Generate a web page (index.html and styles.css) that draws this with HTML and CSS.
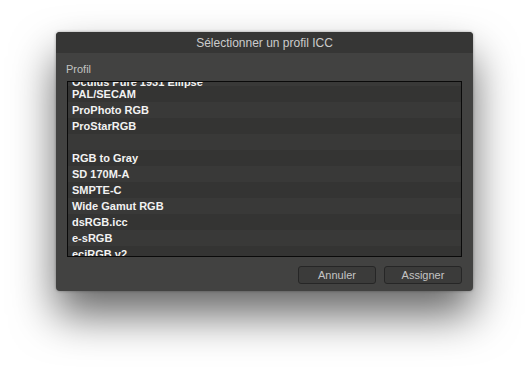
FILE: index.html
```html
<!DOCTYPE html>
<html lang="fr">
<head>
<meta charset="utf-8">
<title>Sélectionner un profil ICC</title>
<link rel="stylesheet" href="styles.css">
</head>
<body>
<div class="stage">
<div class="dialog">
  <div class="titlebar">Sélectionner un profil ICC</div>
  <div class="content">
    <div class="label">Profil</div>
    <div class="listbox">
      <ul class="list">
        <li class="partial">Oculus Pure 1931 Ellipse</li>
        <li>PAL/SECAM</li>
        <li>ProPhoto RGB</li>
        <li>ProStarRGB</li>
        <li></li>
        <li>RGB to Gray</li>
        <li>SD 170M-A</li>
        <li>SMPTE-C</li>
        <li>Wide Gamut RGB</li>
        <li>dsRGB.icc</li>
        <li>e-sRGB</li>
        <li>eciRGB v2</li>
      </ul>
    </div>
    <div class="buttons">
      <button class="btn">Annuler</button>
      <button class="btn">Assigner</button>
    </div>
  </div>
</div>
</div>
</body>
</html>
```
FILE: styles.css
```css
html, body {
  margin: 0;
  padding: 0;
  background: #ffffff;
  font-family: "Liberation Sans", Arial, sans-serif;
}
.stage {
  width: 529px;
  height: 371px;
  box-sizing: border-box;
  padding: 32px 0 0 56px;
  background: #ffffff;
}
.dialog {
  width: 417px;
  height: 259px;
  background: #424241;
  border-radius: 4px;
  box-shadow: 0 24px 44px rgba(0, 0, 0, 0.6), 0 0 3px rgba(0, 0, 0, 0.35);
  display: flex;
  flex-direction: column;
  overflow: hidden;
}
.titlebar {
  height: 21px;
  line-height: 22px;
  background: #363635;
  color: #cccccc;
  font-size: 12px;
  text-align: center;
}
.content {
  flex: 1;
  display: flex;
  flex-direction: column;
  padding: 9px 11px 7px 10px;
}
.label {
  font-size: 11px;
  line-height: 14px;
  color: #c2c2c2;
  margin-bottom: 5px;
}
.listbox {
  margin-left: 1px;
  height: 174px;
  border: 1px solid #0a0a0a;
  background: #343433;
  overflow: hidden;
}
.list {
  list-style: none;
  margin: -12px 0 0 0;
  padding: 0;
}
.list li {
  height: 16px;
  line-height: 16px;
  padding-left: 4px;
  font-size: 11px;
  font-weight: bold;
  color: #f2f2f2;
  background: #393938;
  white-space: nowrap;
}
.list li.partial {
  line-height: 24px;
}
.list li:nth-child(even) {
  background: #343433;
}
.buttons {
  margin-top: 9px;
  display: flex;
  justify-content: flex-end;
  gap: 8px;
}
.btn {
  width: 78px;
  height: 18px;
  padding: 0;
  background: #3b3b3a;
  border: 1px solid #262626;
  border-radius: 3px;
  color: #c4c4c4;
  font-family: "Liberation Sans", Arial, sans-serif;
  font-size: 11px;
  line-height: 16px;
}
```
